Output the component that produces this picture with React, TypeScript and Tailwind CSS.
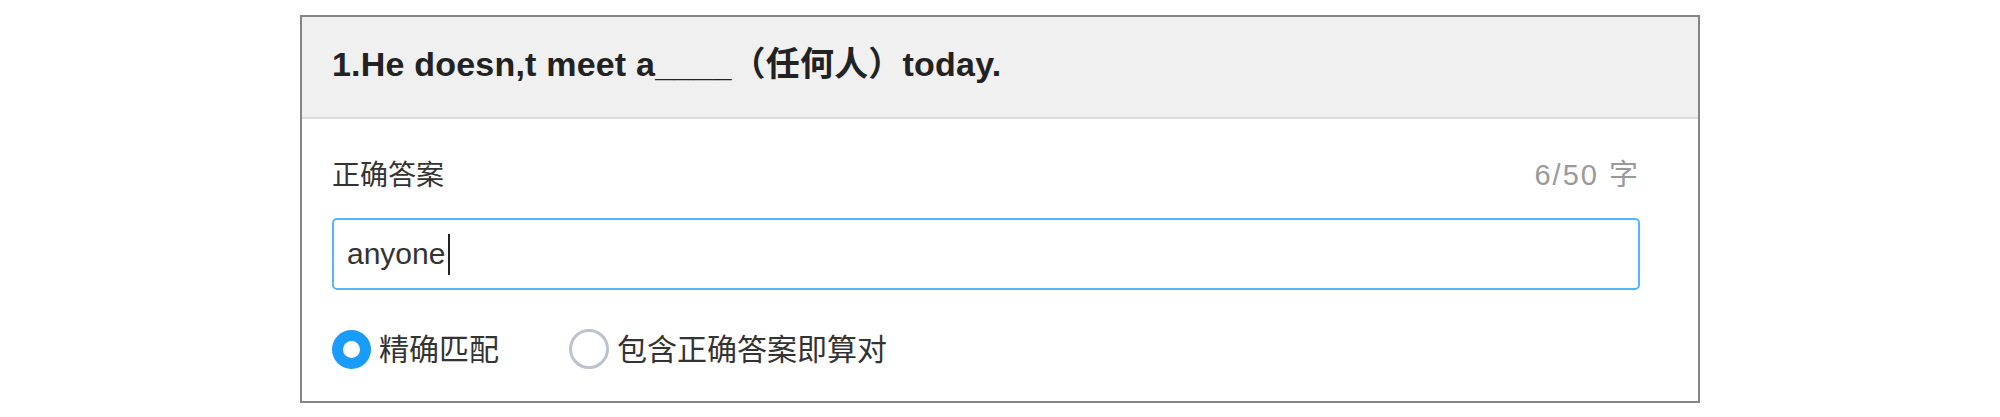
import { useState } from "react"

// 填空题 - 答案设置卡片
const question = {
  title: "1.He doesn,t meet a____（任何人）today.",
  answer: "anyone",
  maxLength: 50,
}

const matchModes = [
  { key: "exact", label: "精确匹配" },
  { key: "contain", label: "包含正确答案即算对" },
]

export default function App() {
  const [mode, setMode] = useState("exact")

  return (
    <div className="w-[2000px] h-[417px] bg-white pt-[15px] font-['Liberation_Sans','Noto_Sans_CJK_SC',sans-serif]">
      <div className="mx-auto w-[1400px] border-2 border-[#858585] bg-white">
        {/* Header */}
        <div className="h-[102px] flex items-center pl-[30px] pb-[6px] bg-[#f0f0f0] border-b-2 border-[#dcdcdc]">
          <h1 className="text-[34px] font-bold text-[#222] leading-[48px] tracking-[0.2px]">{question.title}</h1>
        </div>

        {/* Body */}
        <div className="pl-[30px] pr-[58px] pt-[37px] pb-[32px]">
          <div className="flex items-center justify-between h-[40px]">
            <span className="text-[28px] text-[#333]">正确答案</span>
            <span className="text-[29px] text-[#999] tracking-[2px]">
              {question.answer.length}/{question.maxLength} 字
            </span>
          </div>

          {/* Input */}
          <div className="mt-[22px] h-[72px] border-2 border-[#55b4fb] rounded-[5px] flex items-center pl-[13px]">
            <span className="text-[30px] text-[#333] leading-none">{question.answer}</span>
            <span className="ml-[3px] w-[2px] h-[41px] bg-[#222]" />
          </div>

          {/* Match mode */}
          <div className="mt-[39px] h-[40px] flex items-center gap-[70px]">
            {matchModes.map((m) => {
              const checked = mode === m.key
              return (
                <div
                  key={m.key}
                  className="flex items-center gap-[8px] cursor-pointer"
                  onClick={() => setMode(m.key)}
                >
                  {checked ? (
                    <div className="w-[39px] h-[39px] rounded-full bg-[#1a9cff] flex items-center justify-center">
                      <div className="w-[17px] h-[17px] rounded-full bg-white" />
                    </div>
                  ) : (
                    <div className="w-[40px] h-[40px] rounded-full border-[3px] border-[#bcc3cf]" />
                  )}
                  <span className="text-[30px] text-[#333]">{m.label}</span>
                </div>
              )
            })}
          </div>
        </div>
      </div>
    </div>
  )
}
